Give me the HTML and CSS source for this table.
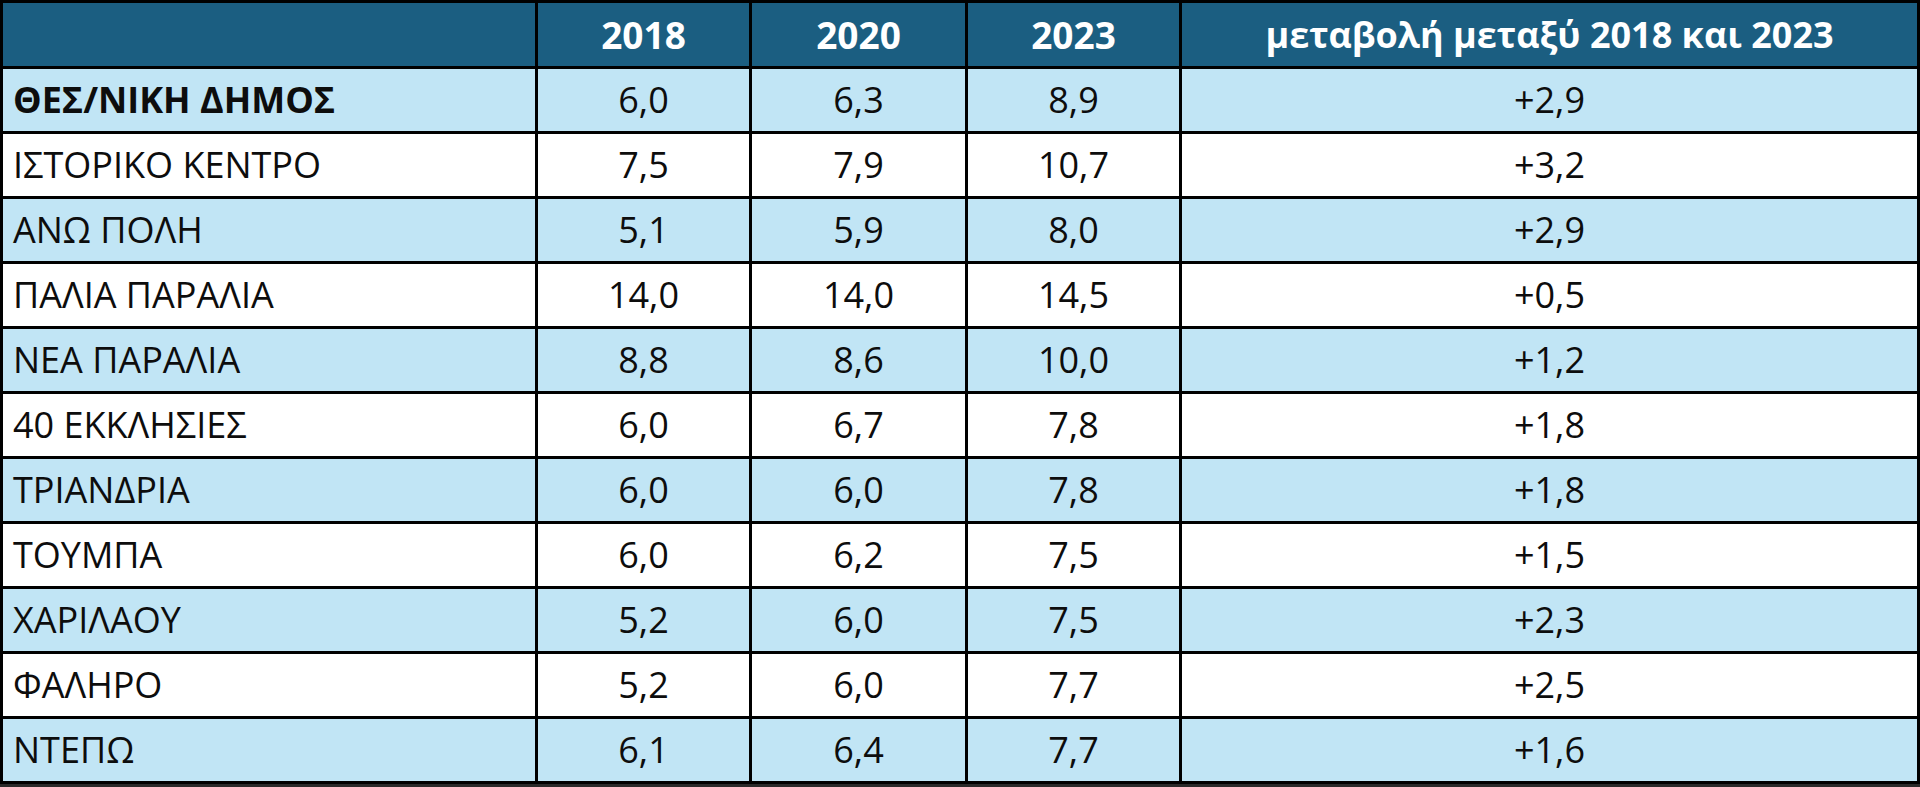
FILE: index.html
```html
<!DOCTYPE html>
<html lang="el">
<head>
<meta charset="utf-8">
<title>Πίνακας</title>
<link rel="stylesheet" href="styles.css">
</head>
<body>
<table class="data">
  <colgroup>
    <col class="c-name">
    <col class="c-year">
    <col class="c-year2">
    <col class="c-year">
    <col class="c-diff">
  </colgroup>
  <thead>
    <tr class="head">
      <th></th>
      <th>2018</th>
      <th>2020</th>
      <th>2023</th>
      <th>μεταβολή μεταξύ 2018 και 2023</th>
    </tr>
  </thead>
  <tbody>
    <tr class="blue total"><td class="name">ΘΕΣ/ΝΙΚΗ ΔΗΜΟΣ</td><td>6,0</td><td>6,3</td><td>8,9</td><td>+2,9</td></tr>
    <tr class="white"><td class="name">ΙΣΤΟΡΙΚΟ ΚΕΝΤΡΟ</td><td>7,5</td><td>7,9</td><td>10,7</td><td>+3,2</td></tr>
    <tr class="blue"><td class="name">ΑΝΩ ΠΟΛΗ</td><td>5,1</td><td>5,9</td><td>8,0</td><td>+2,9</td></tr>
    <tr class="white"><td class="name">ΠΑΛΙΑ ΠΑΡΑΛΙΑ</td><td>14,0</td><td>14,0</td><td>14,5</td><td>+0,5</td></tr>
    <tr class="blue"><td class="name">ΝΕΑ ΠΑΡΑΛΙΑ</td><td>8,8</td><td>8,6</td><td>10,0</td><td>+1,2</td></tr>
    <tr class="white"><td class="name">40 ΕΚΚΛΗΣΙΕΣ</td><td>6,0</td><td>6,7</td><td>7,8</td><td>+1,8</td></tr>
    <tr class="blue"><td class="name">ΤΡΙΑΝΔΡΙΑ</td><td>6,0</td><td>6,0</td><td>7,8</td><td>+1,8</td></tr>
    <tr class="white"><td class="name">ΤΟΥΜΠΑ</td><td>6,0</td><td>6,2</td><td>7,5</td><td>+1,5</td></tr>
    <tr class="blue"><td class="name">ΧΑΡΙΛΑΟΥ</td><td>5,2</td><td>6,0</td><td>7,5</td><td>+2,3</td></tr>
    <tr class="white"><td class="name">ΦΑΛΗΡΟ</td><td>5,2</td><td>6,0</td><td>7,7</td><td>+2,5</td></tr>
    <tr class="blue"><td class="name">ΝΤΕΠΩ</td><td>6,1</td><td>6,4</td><td>7,7</td><td>+1,6</td></tr>
  </tbody>
</table>
</body>
</html>
```

FILE: styles.css
```css
html, body {
  margin: 0;
  padding: 0;
  background: #2a2a2a;
}

body {
  width: 1920px;
  height: 787px;
  overflow: hidden;
}

.data {
  border-collapse: collapse;
  table-layout: fixed;
  width: 1917px;
  font-family: "Open Sans", "Noto Sans", "DejaVu Sans", sans-serif;
  font-size: 36px;
  color: #0d0d0d;
  background: #fff;
}

.c-name { width: 535px; }
.c-year { width: 214px; }
.c-year2 { width: 216px; }
.c-diff { width: 738px; }

.data th,
.data td {
  border: 3px solid #000;
  padding: 0;
  text-align: center;
  vertical-align: middle;
  line-height: 1;
  white-space: nowrap;
}

.head {
  height: 66px;
  background: #1b5e81;
}

.head th {
  color: #fff;
  font-weight: 700;
  font-size: 37px;
}

.head th:last-child {
  font-size: 36px;
}

.data tbody tr {
  height: 65px;
}

.blue { background: #c1e5f5; }
.white { background: #ffffff; }

.data td.name {
  text-align: left;
  padding-left: 10px;
}

.total .name {
  font-weight: 700;
}
```
